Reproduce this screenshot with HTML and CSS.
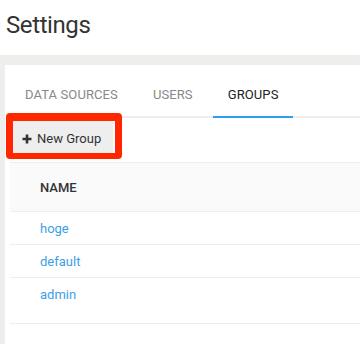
FILE: index.html
```html
<!DOCTYPE html>
<html lang="en">
<head>
    <meta charset="UTF-8">
    <meta name="viewport" content="width=device-width, initial-scale=1.0">
    <title>Settings</title>
    <link rel="stylesheet" href="styles.css">
</head>
<body>
    <h1 class="page-title">Settings</h1>
    <div class="page-body">
        <div class="panel">
            <ul class="tabs">
                <li class="tab">Data Sources</li>
                <li class="tab">Users</li>
                <li class="tab active">Groups</li>
            </ul>
            <div class="toolbar">
                <button class="btn-new">
                    <svg class="plus" width="10" height="10" viewBox="0 0 10 10"><path d="M5 0.5V9.5M0.5 5H9.5" stroke="#333" stroke-width="2.6"/></svg>
                    New Group
                </button>
                <div class="highlight"></div>
            </div>
            <table class="groups">
                <thead>
                    <tr><th>Name</th></tr>
                </thead>
                <tbody>
                    <tr><td><a href="#">hoge</a></td></tr>
                    <tr><td><a href="#">default</a></td></tr>
                    <tr class="last"><td><a href="#">admin</a></td></tr>
                </tbody>
            </table>
        </div>
    </div>
</body>
</html>
```

FILE: styles.css
```css
* { margin: 0; padding: 0; box-sizing: border-box; }
body { font-family: Roboto, "Liberation Sans", sans-serif; background: #fff; color: #333; overflow: hidden; }
.page-title { font-size: 24px; letter-spacing: -0.4px; font-weight: 400; line-height: 30px; padding: 10px 0 15px 6px; height: 55px; color: #333; }
.page-body { background: #eeeeec; padding: 10px 0 0 5px; height: 289px; }
.panel { background: #fff; height: 100%; padding: 7px 0 0 5px; }
.tabs { list-style: none; display: flex; gap: 5px; border-bottom: 2px solid #eee; }
.tab { font-size: 13px; letter-spacing: 0.1px; line-height: 20px; padding: 13px 15px 11px; text-transform: uppercase; color: #888; margin-bottom: -2px; border-bottom: 2px solid transparent; }
.tab.active { color: #222; border-bottom-color: #2c9ff0; }
.toolbar { position: relative; padding: 3px 0 7px; }
.btn-new { display: inline-flex; align-items: center; gap: 5px; font-family: inherit; font-size: 13px; line-height: 20px; padding: 8px 12px 6px; border: none; border-radius: 2px; background: #eee; color: #333; }
.highlight { position: absolute; left: -4px; top: -5px; width: 116px; height: 46px; border: 7px solid #ff2600; border-bottom-width: 6px; border-top-width: 8px; border-radius: 4px; }
.groups { width: 100%; border-collapse: collapse; font-size: 13px; }
.groups th { text-align: left; font-weight: 500; text-transform: uppercase; color: #333; background: #fafafa; line-height: 20px; padding: 15px 30px 13px; border-top: 1px solid #eee; border-bottom: 1px solid #eee; }
.groups td { line-height: 20px; padding: 7px 30px 5px; border-bottom: 1px solid #eee; }
.groups tr.last td { padding-bottom: 18px; }
.groups a { color: #3ba0e6; text-decoration: none; }
```
